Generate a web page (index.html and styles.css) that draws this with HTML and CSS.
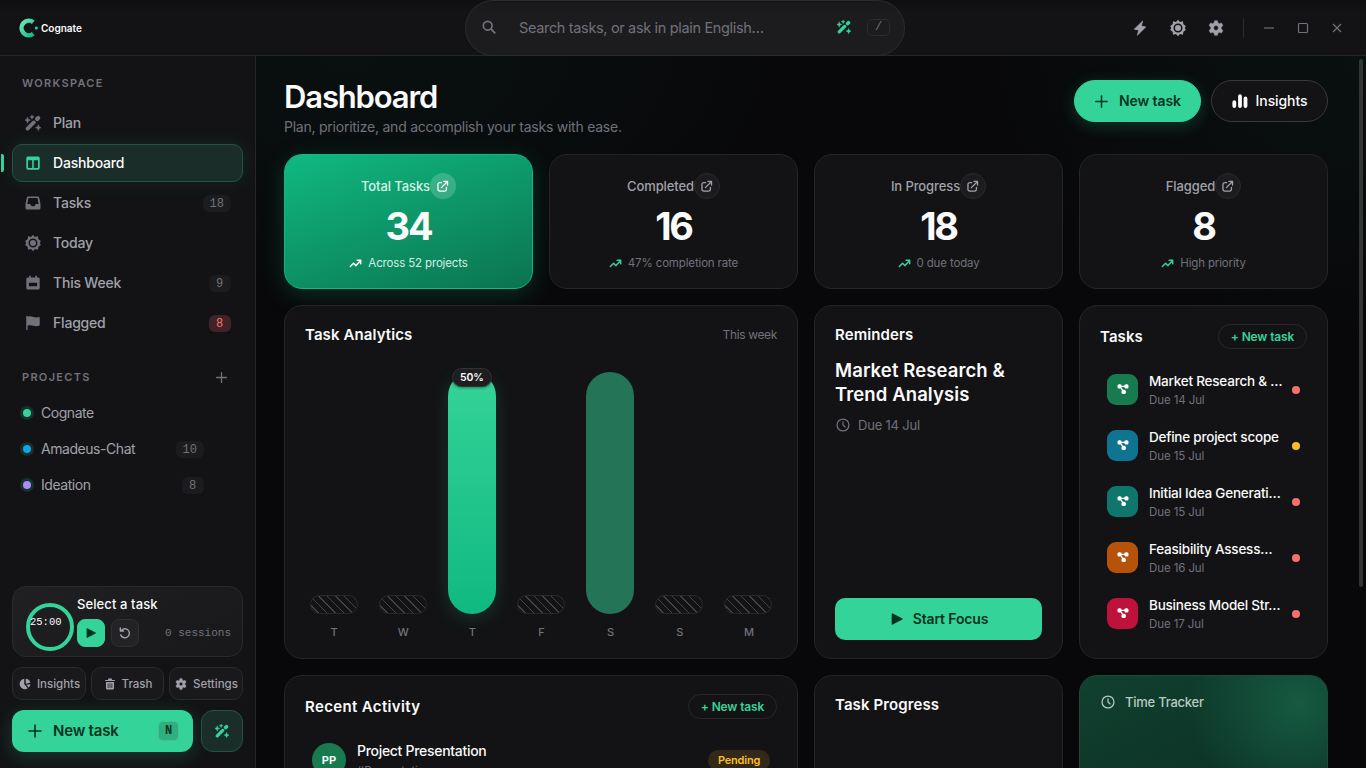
FILE: index.html
```html
<!DOCTYPE html>
<html lang="en">
<head>
    <meta charset="UTF-8">
    <meta name="viewport" content="width=device-width, initial-scale=1.0">
    <title>Cognate - Dashboard</title>
    <link rel="stylesheet" href="styles.css">
</head>
<body>
    <!-- Icon set -->
    <svg class="icon-defs" width="0" height="0">
        <defs>
            <linearGradient id="logoFill" x1="0" y1="0" x2="1" y2="1">
                <stop offset="0" stop-color="#6ee7b7"/>
                <stop offset="1" stop-color="#10b981"/>
            </linearGradient>
        </defs>
        <symbol id="i-wand" viewBox="0 0 16 16">
            <path d="M2.600 13.600 8.800 7.400" fill="none" stroke="currentColor" stroke-width="3.700" stroke-linecap="round"/>
            <path d="m12.200 4 .9-.9" fill="none" stroke="currentColor" stroke-width="4.200" stroke-linecap="round"/>
            <path d="M2.500 2 3.400 4.200 5.600 5.100 3.400 6 2.500 8.200 1.600 6-.6 5.100 1.600 4.200zM13.300 9.600l.9 2.200 2.200.9-2.200.9-.9 2.200-.9-2.200-2.200-.9 2.200-.9zM7-.2l.7 1.500 1.500.7-1.500.7L7 4.200l-.7-1.500L4.800 2l1.500-.7z" fill="currentColor" stroke="currentColor" stroke-width=".4" stroke-linejoin="round"/>
        </symbol>
        <symbol id="i-board" viewBox="0 0 16 16">
            <path fill="currentColor" fill-rule="evenodd" d="M3 1.400h10A1.700 1.700 0 0 1 14.700 3v10a1.700 1.700 0 0 1-1.700 1.700H3A1.700 1.700 0 0 1 1.300 13V3A1.700 1.700 0 0 1 3 1.400zM3 5.200v7.800h4.200V5.200zm5.800 0v7.800H13V5.200z"/>
        </symbol>
        <symbol id="i-inbox" viewBox="0 0 16 16">
            <path fill="currentColor" fill-rule="evenodd" d="M3.300 1.500h9.400a1.500 1.500 0 0 1 1.500 1.200L15.500 9v4a1.600 1.600 0 0 1-1.600 1.600H2.100A1.600 1.600 0 0 1 .5 13V9l1.300-6.300a1.500 1.500 0 0 1 1.500-1.200zM3.500 3 2.300 9h3c.3 1.500 1.200 2.300 2.700 2.300s2.400-.8 2.700-2.300h3L12.500 3z"/>
        </symbol>
        <symbol id="i-sun" viewBox="0 0 16 16">
            <path fill="currentColor" fill-rule="evenodd" d="M8-.2 10 2.100l2.900-.9.500 3 2.400 1.800L14.800 8l1 2-2.400 1.800-.5 3-2.900-.9L8 16.200l-2-2.300-2.900.9-.5-3L.2 10l1-2-1-2 2.400-1.800.5-3 2.900.9zM8 3.500a4.500 4.500 0 1 0 0 9 4.500 4.500 0 0 0 0-9zM8 5a3 3 0 1 1 0 6 3 3 0 0 1 0-6z"/>
        </symbol>
        <symbol id="i-calendar" viewBox="0 0 16 16">
            <path fill="currentColor" fill-rule="evenodd" d="M4.100.7h1.700v1.800h4.400V.7h1.700v1.800h1.300a1.500 1.500 0 0 1 1.500 1.500v9a1.600 1.600 0 0 1-1.600 1.600H2.900A1.600 1.600 0 0 1 1.300 13V4a1.500 1.500 0 0 1 1.500-1.500h1.300zM4.500 7.700a.6.600 0 0 0-.6.600v2.400c0 .4.200.6.600.6h7c.4 0 .6-.2.600-.6V8.300a.6.600 0 0 0-.6-.6z"/>
        </symbol>
        <symbol id="i-flag" viewBox="0 0 16 16">
            <path fill="currentColor" d="M1.200.9h1.400v.8c2-.6 3.700-.4 5.700.2 2.200.7 4.200.6 6.400 0v8.600c-2.100.9-4.100.9-6.400.2-2-.6-3.700-.7-5.700-.1v4.300H1.200z"/>
        </symbol>
        <symbol id="i-plus" viewBox="0 0 16 16">
            <path d="M8 2v12M2 8h12" fill="none" stroke="currentColor" stroke-width="1.600" stroke-linecap="round"/>
        </symbol>
        <symbol id="i-search" viewBox="0 0 16 16">
            <circle cx="6.500" cy="6.500" r="5" fill="none" stroke="currentColor" stroke-width="1.900"/>
            <path d="m10.300 10.300 4.300 4.300" fill="none" stroke="currentColor" stroke-width="2.100" stroke-linecap="round"/>
        </symbol>
        <symbol id="i-bolt" viewBox="0 0 16 16">
            <path fill="currentColor" stroke="currentColor" stroke-width=".8" stroke-linejoin="round" d="M10.700 1 2.300 9.200l4.500.8-1.400 5.200L13.700 7 9.200 6z"/>
        </symbol>
        <symbol id="i-gear" viewBox="0 0 16 16">
            <path fill="currentColor" fill-rule="evenodd" stroke="currentColor" stroke-width=".5" stroke-linejoin="round" d="M6.500.8h3l.5 2.200 1.200.7 2.200-.7 1.500 2.600-1.700 1.600v1.600l1.700 1.600-1.500 2.600-2.200-.7-1.200.7-.5 2.200h-3L6 13l-1.200-.7-2.200.7-1.500-2.600 1.700-1.600V7.200L1.100 5.600 2.600 3l2.200.7L6 3zM8 5.600a2.400 2.400 0 1 0 0 4.800 2.400 2.400 0 0 0 0-4.800z"/>
        </symbol>
        <symbol id="i-bars" viewBox="0 0 16 16">
            <path d="M2.300 9.200v3.800M8 3.200v9.800M13.500 5.400v7.600" fill="none" stroke="currentColor" stroke-width="3.800" stroke-linecap="round"/>
        </symbol>
        <symbol id="i-open" viewBox="0 0 16 16">
            <path d="M7 3.200H4.600A2.200 2.200 0 0 0 2.400 5.400v6a2.200 2.200 0 0 0 2.200 2.200h6a2.200 2.200 0 0 0 2.200-2.200V9.200M6.600 9.400 13.800 2.200M9.800 1.800h4.400v4.400" fill="none" stroke="currentColor" stroke-width="1.600" stroke-linecap="round" stroke-linejoin="round"/>
        </symbol>
        <symbol id="i-trend" viewBox="0 0 16 16">
            <path d="m1.600 11.800 4-4.200 3 3 5.200-5.800M10 4h4.400v4.400" fill="none" stroke="currentColor" stroke-width="1.800" stroke-linecap="round" stroke-linejoin="round"/>
        </symbol>
        <symbol id="i-clock" viewBox="0 0 16 16">
            <circle cx="8" cy="8" r="6.800" fill="none" stroke="currentColor" stroke-width="1.400"/>
            <path d="M8 4.300V8l2.400 2.200" fill="none" stroke="currentColor" stroke-width="1.400" stroke-linecap="round"/>
        </symbol>
        <symbol id="i-play" viewBox="0 0 16 16">
            <path fill="currentColor" stroke="currentColor" stroke-width="1.800" stroke-linejoin="round" d="M1.800 1.400v13.200L14.800 8z"/>
        </symbol>
        <symbol id="i-reset" viewBox="0 0 16 16">
            <path d="M3 4.800A6 6 0 1 1 2.300 10.500M1.800 1.200v4.200H6" fill="none" stroke="currentColor" stroke-width="1.900" stroke-linecap="round" stroke-linejoin="round"/>
        </symbol>
        <symbol id="i-pie" viewBox="0 0 16 16">
            <path fill="currentColor" d="M7 1v7.400l4.700 5.400A7 7 0 1 1 7 1zM9 1a6.500 6.500 0 0 1 6 5.400L9 7.600zM15.200 8.400a6.500 6.500 0 0 1-2.200 4.400L9.600 9z"/>
        </symbol>
        <symbol id="i-trash" viewBox="0 0 16 16">
            <path fill="currentColor" fill-rule="evenodd" d="M5.500.8h5v1.700h4v1.600h-13V2.500h4zM2.600 5.200h10.800v8.500a1.700 1.700 0 0 1-1.700 1.700H4.300a1.700 1.700 0 0 1-1.700-1.700zM5 7v6.200h1V7zm2.500 0v6.200h1V7zM10 7v6.200h1V7z"/>
        </symbol>
        <symbol id="i-nodes" viewBox="0 0 16 16">
            <path d="M3.600 4.600h8.800M4.200 5 8.800 11.600" fill="none" stroke="currentColor" stroke-width="1.700"/>
            <rect x=".6" y="1.800" width="5.600" height="5.600" rx="2.200" fill="currentColor"/>
            <rect x="9.800" y="1.800" width="5.600" height="5.600" rx="2.200" fill="currentColor"/>
            <rect x="6" y="9" width="5.800" height="5.800" rx="2.200" fill="currentColor"/>
        </symbol>
    </svg>

    <header class="topbar">
        <div class="brand">
            <svg class="logo" viewBox="0 0 20 20">
                <path d="M14.300 4.200A7.300 7.300 0 1 0 14.300 15.800" fill="none" stroke="url(#logoFill)" stroke-width="4.500"/>
                <circle cx="17.300" cy="10" r="1.500" fill="#34d399"/>
            </svg>
            <span>Cognate</span>
        </div>
        <div class="search">
            <svg class="search-icon"><use href="#i-search"/></svg>
            <span class="search-text">Search tasks, or ask in plain English…</span>
            <svg class="search-wand"><use href="#i-wand"/></svg>
            <kbd>/</kbd>
        </div>
        <div class="tools">
            <svg><use href="#i-bolt"/></svg>
            <svg><use href="#i-sun"/></svg>
            <svg><use href="#i-gear"/></svg>
            <span class="divider"></span>
            <svg class="win" viewBox="0 0 12 12"><path d="M1 6h10"/></svg>
            <svg class="win" viewBox="0 0 12 12"><rect x="1.500" y="1.500" width="9" height="9" rx="1"/></svg>
            <svg class="win" viewBox="0 0 12 12"><path d="m2 2 8 8M10 2l-8 8"/></svg>
        </div>
    </header>

    <div class="app">
        <aside class="sidebar">
            <h4 class="side-label">WORKSPACE</h4>
            <nav class="nav">
                <a class="nav-item"><svg><use href="#i-wand"/></svg><span>Plan</span></a>
                <a class="nav-item active"><svg><use href="#i-board"/></svg><span>Dashboard</span></a>
                <a class="nav-item"><svg><use href="#i-inbox"/></svg><span>Tasks</span><b class="count">18</b></a>
                <a class="nav-item"><svg><use href="#i-sun"/></svg><span>Today</span></a>
                <a class="nav-item"><svg><use href="#i-calendar"/></svg><span>This Week</span><b class="count">9</b></a>
                <a class="nav-item"><svg><use href="#i-flag"/></svg><span>Flagged</span><b class="count red">8</b></a>
            </nav>
            <div class="side-head">
                <h4 class="side-label">PROJECTS</h4>
                <svg><use href="#i-plus"/></svg>
            </div>
            <div class="projects">
                <a class="project"><i class="dot green"></i><span>Cognate</span></a>
                <a class="project"><i class="dot blue"></i><span>Amadeus-Chat</span><b class="count">10</b></a>
                <a class="project"><i class="dot purple"></i><span>Ideation</span><b class="count">8</b></a>
            </div>

            <div class="side-bottom">
                <div class="focus">
                    <div class="ring"><span>25:00</span></div>
                    <div class="focus-body">
                        <div class="focus-title">Select a task</div>
                        <div class="focus-row">
                            <button class="mini play"><svg><use href="#i-play"/></svg></button>
                            <button class="mini"><svg><use href="#i-reset"/></svg></button>
                            <span class="sessions">0 sessions</span>
                        </div>
                    </div>
                </div>
                <div class="side-links">
                    <button><svg><use href="#i-pie"/></svg><span>Insights</span></button>
                    <button><svg><use href="#i-trash"/></svg><span>Trash</span></button>
                    <button><svg><use href="#i-gear"/></svg><span>Settings</span></button>
                </div>
                <div class="side-actions">
                    <button class="side-new"><svg><use href="#i-plus"/></svg><span>New task</span><kbd>N</kbd></button>
                    <button class="side-wand"><svg><use href="#i-wand"/></svg></button>
                </div>
            </div>
        </aside>

        <main class="main">
            <div class="page-head">
                <div>
                    <h1>Dashboard</h1>
                    <p>Plan, prioritize, and accomplish your tasks with ease.</p>
                </div>
                <div class="head-actions">
                    <button class="btn primary"><svg><use href="#i-plus"/></svg><span>New task</span></button>
                    <button class="btn"><svg><use href="#i-bars"/></svg><span>Insights</span></button>
                </div>
            </div>

            <div class="grid">
                <section class="card stat featured">
                    <div class="stat-top"><span>Total Tasks</span><i><svg><use href="#i-open"/></svg></i></div>
                    <div class="stat-num">34</div>
                    <div class="stat-note"><svg><use href="#i-trend"/></svg><span>Across 52 projects</span></div>
                </section>
                <section class="card stat">
                    <div class="stat-top"><span>Completed</span><i><svg><use href="#i-open"/></svg></i></div>
                    <div class="stat-num">16</div>
                    <div class="stat-note"><svg><use href="#i-trend"/></svg><span>47% completion rate</span></div>
                </section>
                <section class="card stat">
                    <div class="stat-top"><span>In Progress</span><i><svg><use href="#i-open"/></svg></i></div>
                    <div class="stat-num">18</div>
                    <div class="stat-note"><svg><use href="#i-trend"/></svg><span>0 due today</span></div>
                </section>
                <section class="card stat">
                    <div class="stat-top"><span>Flagged</span><i><svg><use href="#i-open"/></svg></i></div>
                    <div class="stat-num">8</div>
                    <div class="stat-note"><svg><use href="#i-trend"/></svg><span>High priority</span></div>
                </section>

                <section class="card panel wide">
                    <div class="panel-head"><h3>Task Analytics</h3><span class="muted">This week</span></div>
                    <div class="chart">
                        <div class="col"><div class="bar empty"></div><span>T</span></div>
                        <div class="col"><div class="bar empty"></div><span>W</span></div>
                        <div class="col"><div class="bar peak"><em>50%</em></div><span>T</span></div>
                        <div class="col"><div class="bar empty"></div><span>F</span></div>
                        <div class="col"><div class="bar full"></div><span>S</span></div>
                        <div class="col"><div class="bar empty"></div><span>S</span></div>
                        <div class="col"><div class="bar empty"></div><span>M</span></div>
                    </div>
                </section>

                <section class="card panel reminders">
                    <div class="panel-head short"><h3>Reminders</h3></div>
                    <h2>Market Research &amp;<br>Trend Analysis</h2>
                    <div class="due"><svg><use href="#i-clock"/></svg><span>Due 14 Jul</span></div>
                    <button class="start"><svg><use href="#i-play"/></svg><span>Start Focus</span></button>
                </section>

                <section class="card panel">
                    <div class="panel-head tall"><h3>Tasks</h3><button class="pill">+ New task</button></div>
                    <div class="tasks">
                        <div class="task">
                            <div class="tile t-green"><svg><use href="#i-nodes"/></svg></div>
                            <div class="task-text"><strong>Market Research &amp; …</strong><small>Due 14 Jul</small></div>
                            <i class="prio"></i>
                        </div>
                        <div class="task">
                            <div class="tile t-blue"><svg><use href="#i-nodes"/></svg></div>
                            <div class="task-text"><strong>Define project scope</strong><small>Due 15 Jul</small></div>
                            <i class="prio amber"></i>
                        </div>
                        <div class="task">
                            <div class="tile t-teal"><svg><use href="#i-nodes"/></svg></div>
                            <div class="task-text"><strong>Initial Idea Generati…</strong><small>Due 15 Jul</small></div>
                            <i class="prio"></i>
                        </div>
                        <div class="task">
                            <div class="tile t-orange"><svg><use href="#i-nodes"/></svg></div>
                            <div class="task-text"><strong>Feasibility Assess…</strong><small>Due 16 Jul</small></div>
                            <i class="prio"></i>
                        </div>
                        <div class="task">
                            <div class="tile t-red"><svg><use href="#i-nodes"/></svg></div>
                            <div class="task-text"><strong>Business Model Str…</strong><small>Due 17 Jul</small></div>
                            <i class="prio"></i>
                        </div>
                    </div>
                </section>

                <section class="card panel wide recent">
                    <div class="panel-head tall"><h3>Recent Activity</h3><button class="pill">+ New task</button></div>
                    <div class="activity">
                        <div class="avatar">PP</div>
                        <div class="activity-text"><strong>Project Presentation</strong><small>#Presentation</small></div>
                        <span class="status">Pending</span>
                    </div>
                </section>
                <section class="card panel">
                    <div class="panel-head short"><h3>Task Progress</h3></div>
                </section>
                <section class="card panel tracker">
                    <div class="tracker-head"><svg><use href="#i-clock"/></svg><span>Time Tracker</span></div>
                </section>
            </div>
        </main>
        <div class="scroll-thumb"></div>
    </div>
</body>
</html>
```
FILE: styles.css
```css
* {
    box-sizing: border-box;
}

body {
    margin: 0;
    height: 768px;
    overflow: hidden;
    background: #09090b;
    color: #fafafa;
    font-family: Inter, "Liberation Sans", sans-serif;
    font-size: 14px;
}

h1, h2, h3, h4, p {
    margin: 0;
}

button {
    font-family: inherit;
    color: inherit;
    padding: 0;
    cursor: pointer;
}

i, em {
    font-style: normal;
}

svg {
    width: 16px;
    height: 16px;
    flex: none;
    overflow: visible;
}

.icon-defs {
    position: absolute;
    width: 0;
    height: 0;
}

/* Top bar */
.topbar {
    display: grid;
    grid-template-columns: 465px 440px 1fr;
    height: 56px;
    background: linear-gradient(#0f0f11, #131315 12px);
    border-bottom: 1px solid #262628;
}

.brand {
    display: flex;
    align-items: center;
    gap: 2px;
    padding-left: 19px;
    font-size: 10px;
    font-weight: 600;
}

.logo {
    width: 20px;
    height: 20px;
}

.search {
    display: flex;
    align-items: center;
    height: 56px;
    padding: 0 14px 2px 16px;
    background: linear-gradient(#18181a, #1c1c1e 12px);
    border: 1px solid #2c2c2f;
    border-radius: 28px;
    color: #71717a;
}

.search-icon {
    width: 14px;
    height: 14px;
}

.search-text {
    flex: 1;
    padding-left: 23px;
    font-size: 14.5px;
    letter-spacing: -0.34px;
}

.search-wand {
    width: 14px;
    height: 14px;
    color: #34d399;
}

kbd {
    display: grid;
    place-items: center;
    font-family: "Liberation Mono", monospace;
    font-size: 12px;
}

.search kbd {
    width: 23px;
    height: 17px;
    margin-left: 16px;
    border: 1px solid #2c2c2f;
    border-radius: 5px;
}

.tools {
    display: flex;
    align-items: center;
    justify-content: flex-end;
    gap: 22px;
    padding-right: 23px;
    color: #a1a1aa;
}

.divider {
    width: 1px;
    height: 20px;
    margin: 0 -3px 0 -3px;
    background: #2a2a2d;
}

.win {
    width: 12px;
    height: 12px;
    fill: none;
    stroke: #71717a;
    stroke-width: 1.2;
}

/* Sidebar */
.app {
    display: flex;
    position: relative;
    height: 712px;
}

.sidebar {
    display: flex;
    flex-direction: column;
    width: 256px;
    padding: 0 12px 16px;
    background: #131315;
    border-right: 1px solid #262628;
}

.side-label {
    padding-left: 10px;
    font-size: 11px;
    font-weight: 600;
    line-height: 14px;
    letter-spacing: 1.3px;
    color: #71717a;
}

.sidebar > .side-label {
    margin: 20px 0 14px;
}

.nav {
    display: flex;
    flex-direction: column;
    gap: 2px;
}

.nav-item {
    display: flex;
    align-items: center;
    position: relative;
    height: 38px;
    padding: 0 11px 0 12px;
    border: 1px solid transparent;
    border-radius: 10px;
    color: #a1a1aa;
    font-size: 14px;
    font-weight: 500;
    letter-spacing: -0.2px;
}

.nav-item span {
    flex: 1;
    padding: 0 0 2px 12px;
}

.nav-item svg {
    color: #71717a;
}

.nav-item.active {
    background: #1a2d29;
    border-color: #1e5644;
    box-shadow: 0 0 20px rgba(52, 211, 153, 0.1);
    color: #fafafa;
}

.nav-item.active svg {
    color: #34d399;
}

.nav-item.active::before {
    content: "";
    position: absolute;
    left: -12px;
    top: 9px;
    width: 3px;
    height: 18px;
    border-radius: 0 2px 2px 0;
    background: #34d399;
}

.count {
    min-width: 22px;
    height: 17px;
    padding: 0 7px;
    border-radius: 6px;
    background: #1c1c1e;
    color: #71717a;
    font-family: "Liberation Mono", monospace;
    font-size: 12px;
    font-weight: 400;
    line-height: 18px;
    letter-spacing: 0;
}

.count.red {
    background: #402326;
    color: #f87171;
}

.side-head {
    display: flex;
    align-items: center;
    justify-content: space-between;
    margin-top: 28px;
    padding-right: 15px;
    color: #71717a;
}

.side-head svg {
    width: 13px;
    height: 13px;
}

.projects {
    margin-top: 11px;
}

.project {
    display: flex;
    align-items: center;
    height: 36px;
    padding: 0 39px 0 11px;
    color: #a1a1aa;
    letter-spacing: -0.45px;
}

.project span {
    flex: 1;
    padding: 0 0 1px 10px;
}

.dot {
    width: 8px;
    height: 8px;
    border-radius: 50%;
    box-shadow: 0 0 0 3px #183029;
}

.dot.green { background: #34d399; }
.dot.blue { background: #0ea5e9; }
.dot.purple { background: #a78bfa; }

.side-bottom {
    margin-top: auto;
}

.focus {
    display: flex;
    gap: 3px;
    height: 71px;
    padding: 9px 11px 9px 13px;
    background: linear-gradient(150deg, #202023, #18181a);
    border: 1px solid #2a2a2d;
    border-radius: 14px;
}

.ring {
    width: 48px;
    height: 48px;
    margin-top: 7px;
    padding-top: 9px;
    border: 4px solid #34d399;
    border-radius: 50%;
    font-family: "Liberation Mono", monospace;
    font-size: 10.5px;
    line-height: 12px;
    white-space: nowrap;
}

.focus-body {
    flex: 1;
}

.focus-title {
    font-size: 13px;
    font-weight: 500;
    line-height: 17px;
    letter-spacing: 0.1px;
}

.focus-row {
    display: flex;
    align-items: center;
    gap: 6px;
    margin-top: 6px;
}

.mini {
    display: grid;
    place-items: center;
    width: 28px;
    height: 28px;
    background: #232326;
    border: 1px solid #303033;
    border-radius: 8px;
    color: #a1a1aa;
}

.mini svg {
    width: 12px;
    height: 12px;
}

.mini.play {
    background: #34d399;
    border-color: #34d399;
    color: #053321;
}

.mini.play svg {
    width: 10px;
    height: 10px;
}

.sessions {
    margin-left: auto;
    color: #71717a;
    font-family: "Liberation Mono", monospace;
    font-size: 11px;
}

.side-links {
    display: grid;
    grid-template-columns: 74px 73px 74px;
    gap: 5px;
    margin-top: 10px;
}

.side-links button {
    display: flex;
    align-items: center;
    justify-content: center;
    gap: 6px;
    height: 33px;
    padding-left: 1px;
    background: #19191b;
    border: 1px solid #2a2a2d;
    border-radius: 10px;
    color: #a1a1aa;
    font-size: 11.5px;
    font-weight: 500;
}

.side-links svg {
    width: 12px;
    height: 12px;
}

.side-actions {
    display: flex;
    gap: 8px;
    margin-top: 10px;
}

.side-new {
    display: flex;
    align-items: center;
    flex: 1;
    height: 42px;
    padding: 0 14px 0 15px;
    background: #34d399;
    border: 0;
    border-radius: 12px;
    box-shadow: 0 4px 18px rgba(52, 211, 153, 0.22);
    color: #053321;
    font-size: 15px;
    font-weight: 600;
    letter-spacing: -0.2px;
}

.side-new span {
    flex: 1;
    padding: 0 0 1px 10px;
    text-align: left;
}

.side-new kbd {
    width: 21px;
    height: 20px;
    background: #2cb080;
    border: 1px solid #4fbd91;
    border-radius: 5px;
    font-weight: 700;
}

.side-wand {
    display: grid;
    place-items: center;
    width: 42px;
    height: 42px;
    background: #1a2d29;
    border: 1px solid #1e5644;
    border-radius: 12px;
    color: #34d399;
}

.side-wand svg {
    width: 14px;
    height: 14px;
}

/* Main */
.main {
    flex: 1;
    height: 712px;
    padding: 24px 38px 0 28px;
    overflow: hidden;
    background:
        radial-gradient(600px 320px at 8% 0, rgba(16, 60, 48, 0.16), transparent 75%),
        radial-gradient(520px 380px at 100% 0, rgba(16, 60, 48, 0.16), transparent 75%),
        #08080a;
}

.scroll-thumb {
    position: absolute;
    top: 3px;
    right: 3px;
    width: 4px;
    height: 528px;
    border-radius: 2px;
    background: #323436;
}

.page-head {
    display: flex;
    justify-content: space-between;
    height: 74px;
}

h1 {
    font-size: 31px;
    font-weight: 600;
    line-height: 34px;
    letter-spacing: -1.15px;
}

.page-head p {
    margin-top: 4px;
    color: #71717a;
    font-size: 14px;
    line-height: 18px;
    letter-spacing: -0.24px;
}

.head-actions {
    display: flex;
    gap: 10px;
}

.btn {
    display: flex;
    align-items: center;
    justify-content: center;
    gap: 8px;
    width: 117px;
    height: 42px;
    background: #131315;
    border: 1px solid #39393c;
    border-radius: 21px;
    font-size: 14px;
    font-weight: 500;
    letter-spacing: -0.1px;
}

.btn span {
    padding-bottom: 1px;
}

.btn.primary {
    width: 127px;
    gap: 10px;
    background: #34d399;
    border-color: #34d399;
    box-shadow: 0 4px 16px rgba(52, 211, 153, 0.22);
    color: #053321;
    font-weight: 600;
}

.btn.primary svg {
    width: 15px;
    height: 15px;
}

.grid {
    display: grid;
    grid-template-columns: repeat(4, 249px);
    grid-template-rows: 135px 354px 354px;
    gap: 16px;
}

.card {
    background: #131315;
    border: 1px solid #252527;
    border-radius: 18px;
}

.wide {
    grid-column: span 2;
}

/* Stats */
.stat {
    padding-top: 18px;
    text-align: center;
}

.stat-top {
    display: flex;
    align-items: center;
    justify-content: center;
    height: 26px;
    color: #a1a1aa;
    font-size: 13px;
    font-weight: 500;
    letter-spacing: -0.1px;
}

.stat-top i {
    display: grid;
    place-items: center;
    width: 26px;
    height: 26px;
    padding-right: 1px;
    background: #1c1c1e;
    border: 1px solid #2a2a2d;
    border-radius: 50%;
}

.stat-top svg {
    width: 13px;
    height: 13px;
}

.stat-num {
    margin-top: 8px;
    font-size: 38px;
    font-weight: 700;
    line-height: 38px;
    letter-spacing: -2.2px;
}

.stat-note {
    display: flex;
    align-items: center;
    justify-content: center;
    gap: 6px;
    height: 18px;
    margin-top: 9px;
    color: #71717a;
    font-size: 11.5px;
    letter-spacing: -0.15px;
}

.stat-note svg {
    width: 13px;
    height: 13px;
    color: #34d399;
}

.featured {
    background: linear-gradient(160deg, #10b981, #0b7350);
    border-color: #14b582;
    box-shadow: 0 6px 24px rgba(16, 185, 129, 0.22);
}

.featured .stat-top {
    color: #d5f2e7;
}

.featured .stat-top i {
    background: rgba(255, 255, 255, 0.18);
    border: 0;
    color: #fff;
}

.featured .stat-note {
    color: #d5efe5;
}

.featured .stat-note svg {
    color: #fff;
}

/* Panels */
.panel {
    display: flex;
    flex-direction: column;
    padding: 18px 20px;
}

.panel-head {
    display: flex;
    align-items: center;
    justify-content: space-between;
    height: 22px;
}

.panel-head.tall {
    height: 25px;
}

.panel-head.short {
    height: 20px;
}

h3 {
    font-size: 15px;
    font-weight: 600;
    letter-spacing: 0.1px;
}

.recent h3 {
    letter-spacing: 0.35px;
}

.muted {
    color: #71717a;
    font-size: 12px;
    letter-spacing: -0.35px;
}

.pill {
    width: 89px;
    height: 25px;
    background: none;
    border: 1px solid #28282b;
    border-radius: 13px;
    color: #34d399;
    font-size: 12px;
    font-weight: 600;
    letter-spacing: -0.15px;
}

.chart {
    display: grid;
    flex: none;
    grid-template-columns: repeat(7, 1fr);
    gap: 12px;
    height: 296px;
}

.col {
    display: flex;
    flex-direction: column;
    align-items: center;
    justify-content: flex-end;
}

.col span {
    margin-top: 10px;
    padding-left: 1px;
    color: #71717a;
    font-size: 11px;
    font-weight: 500;
    line-height: 16px;
}

.bar {
    position: relative;
    width: 48px;
    height: 242px;
    border-radius: 24px;
}

.bar.empty {
    height: 19px;
    border: 1px solid #28282b;
    background: repeating-linear-gradient(45deg, transparent 0 4.7px, #434347 4.7px 6px);
}

.bar.full {
    background: #247458;
}

.bar.peak {
    background: linear-gradient(#34d399, #10b981);
    box-shadow: 0 4px 18px rgba(52, 211, 153, 0.17);
}

.bar em {
    display: grid;
    place-items: center;
    position: absolute;
    top: -4px;
    left: 4px;
    width: 40px;
    height: 19px;
    background: #1e1e21;
    border: 1px solid #323235;
    border-radius: 10px;
    box-shadow: 0 1px 3px rgba(0, 0, 0, 0.4);
    font-size: 10.5px;
    font-weight: 600;
    letter-spacing: -0.2px;
}

.reminders h2 {
    margin-top: 14px;
    font-size: 18.5px;
    font-weight: 600;
    line-height: 24px;
    letter-spacing: 0.1px;
}

.due {
    display: flex;
    align-items: center;
    gap: 8px;
    margin-top: 10px;
    color: #71717a;
    font-size: 13px;
    line-height: 18px;
    letter-spacing: -0.2px;
}

.due svg {
    width: 14px;
    height: 14px;
    margin-left: 1px;
}

.start {
    display: flex;
    align-items: center;
    justify-content: center;
    gap: 10px;
    height: 42px;
    margin-top: auto;
    padding-left: 2px;
    background: #34d399;
    border: 0;
    border-radius: 10px;
    color: #053321;
    font-size: 14px;
    font-weight: 600;
    letter-spacing: -0.15px;
}

.start span {
    padding-bottom: 1px;
}

.start svg {
    width: 12px;
    height: 12px;
}

.tasks {
    margin-top: 12px;
}

.task {
    display: flex;
    align-items: center;
    height: 56px;
    padding: 0 7px;
}

.tile {
    display: grid;
    place-items: center;
    width: 31px;
    height: 31px;
    border-radius: 9px;
    color: #fff;
}

.tile svg {
    width: 12px;
    height: 12px;
}

.t-green { background: #187b50; }
.t-blue { background: #0e7490; }
.t-teal { background: #0f766e; }
.t-orange { background: #b45309; }
.t-red { background: #be123c; }

.task-text, .activity-text {
    flex: 1;
    padding-left: 11px;
    white-space: nowrap;
}

.task-text {
    padding-top: 3px;
}

strong {
    display: block;
    font-size: 14px;
    font-weight: 500;
    line-height: 19px;
    letter-spacing: -0.3px;
}

.task-text strong {
    font-size: 13.5px;
    letter-spacing: -0.22px;
}

small {
    display: block;
    color: #71717a;
    font-size: 11.5px;
    line-height: 19px;
    letter-spacing: -0.1px;
}

.prio {
    width: 8px;
    height: 8px;
    margin-top: 2px;
    border-radius: 50%;
    background: #f87171;
}

.prio.amber {
    background: #fbbf24;
}

.activity {
    display: flex;
    align-items: center;
    height: 56px;
    margin-top: 13px;
    padding: 0 7px;
}

.activity-text {
    padding-top: 2px;
}

.activity-text small {
    margin-top: 2px;
}

.avatar {
    width: 34px;
    height: 34px;
    border-radius: 50%;
    background: #187b50;
    font-size: 11px;
    font-weight: 700;
    line-height: 34px;
    text-align: center;
}

.status {
    width: 62px;
    height: 21px;
    border-radius: 11px;
    background: #33291a;
    color: #fbbf24;
    font-size: 11px;
    font-weight: 600;
    line-height: 21px;
    letter-spacing: -0.2px;
    text-align: center;
}

.tracker {
    border-color: #1c4938;
    background:
        radial-gradient(circle 110px at 88% 8%, #165a42, transparent),
        linear-gradient(150deg, #11402f, #0b2f23 50%, #124432);
}

.tracker-head {
    display: flex;
    align-items: center;
    gap: 10px;
    height: 16px;
    padding-left: 1px;
    color: #b8cbc3;
    font-size: 13px;
    font-weight: 500;
    letter-spacing: -0.25px;
}

.tracker-head svg {
    width: 14px;
    height: 14px;
}
```
